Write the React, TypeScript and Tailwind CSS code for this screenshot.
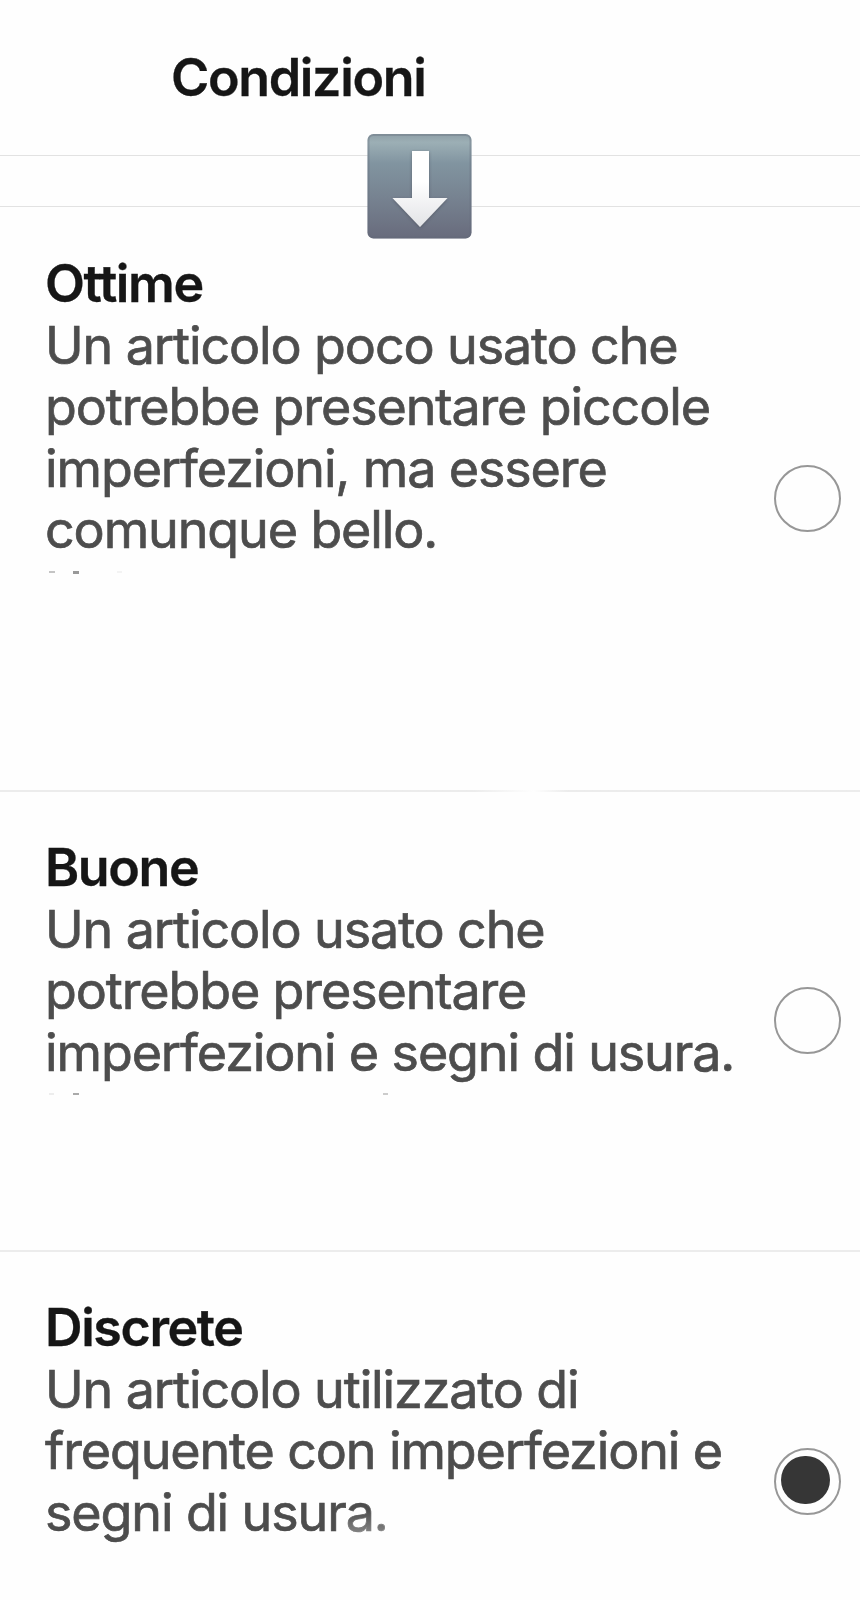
import { useState } from 'react';

type Condition = {
  id: string;
  title: string;
  lines: string[];
  height: string;
  padding: string;
};

const conditions: Condition[] = [
  {
    id: 'ottime',
    title: 'Ottime',
    lines: [
      'Un articolo poco usato che',
      'potrebbe presentare piccole',
      'imperfezioni, ma essere',
      'comunque bello.',
    ],
    height: 'h-[583px]',
    padding: 'pt-[46px]',
  },
  {
    id: 'buone',
    title: 'Buone',
    lines: ['Un articolo usato che', 'potrebbe presentare', 'imperfezioni e segni di usura.'],
    height: 'h-[458px]',
    padding: 'pt-[45px]',
  },
  {
    id: 'discrete',
    title: 'Discrete',
    lines: ['Un articolo utilizzato di', 'frequente con imperfezioni e', 'segni di usur'],
    height: 'h-[460px]',
    padding: 'pt-[45px]',
  },
];

const ArrowBadge = () => (
  <svg
    className="absolute left-[366px] top-[132px] z-10"
    width="108"
    height="108"
    viewBox="0 0 108 108"
  >
    <defs>
      <linearGradient id="tile" x1="0" y1="0" x2="0" y2="1">
        <stop offset="0" stopColor="#8f9fa7" />
        <stop offset="0.08" stopColor="#9cafb5" />
        <stop offset="0.28" stopColor="#8194a0" />
        <stop offset="0.6" stopColor="#778391" />
        <stop offset="1" stopColor="#686b7c" />
      </linearGradient>
      <linearGradient id="arrow" x1="0" y1="0" x2="0" y2="1">
        <stop offset="0.4" stopColor="#ffffff" />
        <stop offset="1" stopColor="#e2e3e6" />
      </linearGradient>
      <filter id="shade" x="-20%" y="-20%" width="140%" height="140%">
        <feDropShadow dx="0" dy="1" stdDeviation="1.6" floodColor="#3c4350" floodOpacity="0.55" />
      </filter>
    </defs>
    <rect x="1.5" y="2" width="104" height="104.5" rx="6" fill="url(#tile)" />
    <rect x="2.5" y="3" width="102" height="102.5" rx="5" fill="none" stroke="#606a78" strokeOpacity="0.35" strokeWidth="2" />
    <path
      d="M46 19H63V66H81.5L54 95L26.5 66H46Z"
      fill="url(#arrow)"
      filter="url(#shade)"
    />
  </svg>
);

// slivers of the cut-off note under a description
const OttimeNote = () => (
  <div className="flex h-[3px] pl-[4px] mt-[10px]">
    <span className="w-[6px] h-[2px] bg-[#c4c4c4]" />
    <span className="ml-[18px] w-[6px] bg-[#999]" />
    <span className="ml-[38px] w-[5px] h-[2px] bg-[#f3f3f3]" />
  </div>
);

const BuoneNote = () => (
  <div className="flex h-[2px] pl-[4px] mt-[10px]">
    <span className="w-[5px] bg-[#ededed]" />
    <span className="ml-[19px] w-[6px] bg-[#aaa]" />
    <span className="ml-[304px] w-[5px] bg-[#ccc]" />
  </div>
);

const Radio = ({ checked, onClick }: { checked: boolean; onClick: () => void }) => (
  <button
    role="radio"
    aria-checked={checked}
    onClick={onClick}
    className="flex shrink-0 items-center justify-center w-[67px] h-[67px] mb-[1px] rounded-full border-2 border-[#979797]"
  >
    {checked && <span className="w-[49px] h-[48px] mr-[4px] mb-[3px] rounded-full bg-[#363636]" />}
  </button>
);

const App = () => {
  const [selected, setSelected] = useState('discrete');

  return (
    <div className="relative flex flex-col w-[860px] h-[1600px] overflow-hidden bg-[#fefefe] font-['Inter',sans-serif] text-[52px] leading-[61.5px]">
      <header className="shrink-0 h-[156px] pt-[47px] pl-[171px] border-b border-[#e2e2e2]">
        <h1 className="font-semibold tracking-[-0.026em] text-[#161616] [-webkit-text-stroke:0.3px_#161616]">Condizioni</h1>
      </header>
      <div className="shrink-0 h-[51px] border-b border-[#e2e2e2]" />
      <ArrowBadge />

      {conditions.map((item, index) => (
        <section key={item.id} className="shrink-0">
          {index === 1 && (
            <div className="h-[2px] bg-linear-to-r from-[#ececec] from-55% via-[#fefefe] via-62% to-[#ececec] to-66%" />
          )}
          {index === 2 && <div className="h-[2px] bg-[#ececec]" />}
          <div className={`flex items-center justify-between pl-[45px] pr-[19px] ${item.height}`}>
            <div className={`self-start ${item.padding}`}>
              <h2 className="font-semibold tracking-[-0.027em] text-[#161616] [-webkit-text-stroke:0.3px_#161616]">
                {item.title}
              </h2>
              <p className="text-[#4d4d4d] tracking-[-0.0215em] whitespace-nowrap [-webkit-text-stroke:0.7px_#4d4d4d]">
                {item.lines.map((line) => (
                  <span key={line} className="block">
                    {line}
                    {item.id === 'discrete' && line === item.lines[2] && (
                      <span className="bg-linear-to-b from-[#4d4d4d] from-45% to-[#808080] to-80% bg-clip-text text-transparent [-webkit-text-stroke:0.7px_transparent]">
                        a.
                      </span>
                    )}
                  </span>
                ))}
              </p>
              {item.id === 'ottime' && <OttimeNote />}
              {item.id === 'buone' && <BuoneNote />}
            </div>
            <Radio checked={selected === item.id} onClick={() => setSelected(item.id)} />
          </div>
        </section>
      ))}
    </div>
  );
};

export default App;
